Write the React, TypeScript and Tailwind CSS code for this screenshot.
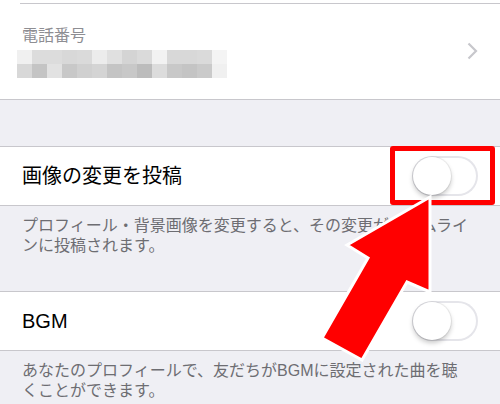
const mosaicTop = [
  'bg-[#f0f0f0]', 'bg-[#dcdcdc]', 'bg-[#dcdcdc]', 'bg-[#d8d8d8]', 'bg-[#dadada]', 'bg-[#ececec]', 'bg-[#e0e0e0]',
  'bg-[#d4d4d4]', 'bg-[#dadada]', 'bg-[#f2f2f2]', 'bg-[#d8d8d8]', 'bg-[#d8d8d8]', 'bg-[#dadada]', 'bg-[#f4f4f4]',
];
const mosaicBottom = [
  'bg-[#d8d8d8]', 'bg-[#c4c4c4]', 'bg-[#e2e2e2]', 'bg-[#c8c8c8]', 'bg-[#d0d0d0]', 'bg-[#d4d4d4]', 'bg-[#c4c4c4]',
  'bg-[#c8c8c8]', 'bg-[#bcbcbc]', 'bg-[#dcdcdc]', 'bg-[#c8c8c8]', 'bg-[#c4c4c4]', 'bg-[#cacaca]', 'bg-[#f0f0f0]',
];

function Toggle() {
  return (
    <div className="flex h-[40px] w-[66px] items-center rounded-full bg-white shadow-[inset_0_0_0_2px_#e5e5ea]">
      <div className="h-[38px] w-[38px] ml-px rounded-full bg-white shadow-[0_3px_5px_rgba(0,0,0,0.22),0_0_0_1px_rgba(0,0,0,0.06)]" />
    </div>
  );
}

function Mosaic() {
  return (
    <div className="flex flex-col -ml-[5px]">
      <div className="flex">
        {mosaicTop.map((c, i) => (
          <div key={i} className={`h-[14px] w-[15px] ${c}`} />
        ))}
      </div>
      <div className="flex">
        {mosaicBottom.map((c, i) => (
          <div key={i} className={`h-[14px] w-[15px] ${c}`} />
        ))}
      </div>
    </div>
  );
}

export default function App() {
  return (
    <div
      className="relative h-[404px] w-[500px] overflow-hidden bg-[#efeff4]"
      style={{ fontFamily: '"Liberation Sans", "Noto Sans CJK JP", sans-serif' }}
    >
      {/* phone number */}
      <div className="bg-white pt-[3px] border-b border-[#c8c7cc]">
        <div className="ml-5 border-t border-[#c8c7cc]" />
        <div className="flex h-[95px] items-center justify-between pl-[22px] pr-[22px]">
          <div className="flex flex-col gap-[4px]">
            <span className="text-[16px] leading-[20px] text-[#8e8e93]">電話番号</span>
            <Mosaic />
          </div>
          <svg width="11" height="18" viewBox="0 0 11 18" className="mb-[2px]">
            <path d="M1.5 1.5 L9 9 L1.5 16.5" fill="none" stroke="#c7c7cc" strokeWidth="2.2" />
          </svg>
        </div>
      </div>

      <div className="h-[46px]" />

      {/* post image change */}
      <div className="flex h-[60px] items-center justify-between border-y border-[#c8c7cc] bg-white pl-[22px] pr-[22px]">
        <span className="text-[20px] text-black">画像の変更を投稿</span>
        <Toggle />
      </div>
      <div className="h-[85px] pl-[22px] pr-[20px] pt-[10px] text-[16px] leading-[20px] text-[#6d6d72]">
        プロフィール・背景画像を変更すると、その変更がタイムライ
        <br />
        ンに投稿されます。
      </div>

      {/* BGM */}
      <div className="flex h-[60px] items-center justify-between border-y border-[#c8c7cc] bg-white pl-[22px] pr-[22px]">
        <span className="text-[20px] text-black">BGM</span>
        <Toggle />
      </div>
      <div className="pl-[22px] pr-[20px] pt-[10px] text-[16px] leading-[20px] text-[#6d6d72]">
        あなたのプロフィールで、友だちがBGMに設定された曲を聴
        <br />
        くことができます。
      </div>

      {/* annotation */}
      <div className="absolute left-[390px] top-[146px] h-[59px] w-[105px] rounded-[3px] border-[5px] border-[#ff0000]" />
      <svg className="absolute left-0 top-0" width="500" height="404" viewBox="0 0 500 404">
        <polygon
          points="430,197 347,245 368,258 322,338 362,360 407,282 430,292"
          fill="#ff0000"
          stroke="#ffffff"
          strokeWidth="3"
          strokeLinejoin="miter"
        />
      </svg>
    </div>
  );
}
